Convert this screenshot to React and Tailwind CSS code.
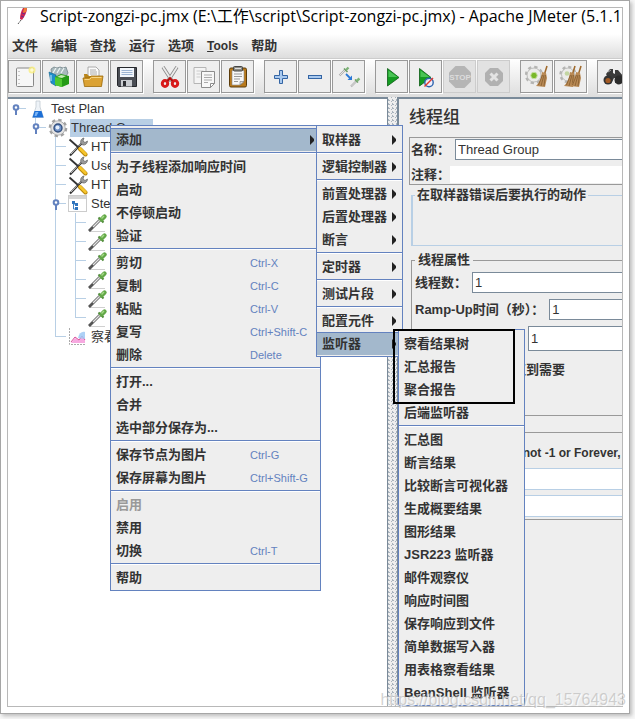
import { useState } from 'react';
import clsx from 'clsx';

const MENUS = ['文件', '编辑', '查找', '运行', '选项', 'Tools', '帮助'];

const CONTEXT_MENU = [
  [{ label: '添加', arrow: true, active: true }],
  [{ label: '为子线程添加响应时间' }, { label: '启动' }, { label: '不停顿启动' }, { label: '验证' }],
  [
    { label: '剪切', keys: 'Ctrl-X' },
    { label: '复制', keys: 'Ctrl-C' },
    { label: '粘贴', keys: 'Ctrl-V' },
    { label: '复写', keys: 'Ctrl+Shift-C' },
    { label: '删除', keys: 'Delete' },
  ],
  [{ label: '打开...' }, { label: '合并' }, { label: '选中部分保存为...' }],
  [{ label: '保存节点为图片', keys: 'Ctrl-G' }, { label: '保存屏幕为图片', keys: 'Ctrl+Shift-G' }],
  [{ label: '启用', disabled: true }, { label: '禁用' }, { label: '切换', keys: 'Ctrl-T' }],
  [{ label: '帮助' }],
];

const ADD_MENU = [
  [{ label: '取样器', arrow: true }],
  [{ label: '逻辑控制器', arrow: true }],
  [{ label: '前置处理器', arrow: true }, { label: '后置处理器', arrow: true }, { label: '断言', arrow: true }],
  [{ label: '定时器', arrow: true }],
  [{ label: '测试片段', arrow: true }],
  [{ label: '配置元件', arrow: true }, { label: '监听器', arrow: true, active: true }],
];

const LISTENER_MENU = [
  [{ label: '察看结果树' }, { label: '汇总报告' }, { label: '聚合报告' }, { label: '后端监听器' }],
  [
    { label: '汇总图' },
    { label: '断言结果' },
    { label: '比较断言可视化器' },
    { label: '生成概要结果' },
    { label: '图形结果' },
    { label: 'JSR223 监听器' },
    { label: '邮件观察仪' },
    { label: '响应时间图' },
    { label: '保存响应到文件' },
    { label: '简单数据写入器' },
    { label: '用表格察看结果' },
    { label: 'BeanShell 监听器' },
  ],
];

/* Toolbar icons, all on a 24px grid */

const NewIcon = () => (
  <svg viewBox="0 0 24 24" className="size-6">
    <rect x="3.5" y="3" width="17" height="18.500" rx="1" fill="#f7f7f7" stroke="#888" />
    <path d="M6 6v13" stroke="#999" strokeDasharray="1 3" />
    <circle cx="19" cy="5" r="3.500" fill="#f9ee7a" opacity=".8" />
    <circle cx="19" cy="5" r="1.800" fill="#fffbd0" />
  </svg>
);

const TemplatesIcon = () => (
  <svg viewBox="0 0 24 24" className="size-6">
    <path d="M4 4l3-2 3 1 3-1 3 1 3-1 2 6-3 5H5z" fill="#a9b9bd" stroke="#73858a" strokeWidth=".8" />
    <path d="M6 8l3-5M10 8l3-5M14 8l3-5" stroke="#eef6f6" strokeWidth="1.200" />
    <path d="M2 7l7 3v11l-5-3z" fill="#1f8fc9" stroke="#12648f" strokeWidth=".6" />
    <path d="M4 10v6" stroke="#aee0f8" strokeWidth="1.200" />
    <path d="M8 12l6-3 8 2v8l-7 3-7-2z" fill="#249a16" />
    <path d="M8 12l7 2v8l-7-2z" fill="#4fc92f" />
    <path d="M10 12l4-2 5 1-4 2z" fill="#c4ecb2" />
  </svg>
);

const OpenIcon = () => (
  <svg viewBox="0 0 24 24" className="size-6">
    <path d="M7 2h8l3 3v10H7z" fill="#fbfbfb" stroke="#999" strokeWidth=".8" />
    <path d="M9 5h6M9 7h7M9 9h7" stroke="#999" strokeWidth=".8" />
    <path d="M3 9h3l2 2h13v9H4z" fill="#b9851b" />
    <path d="M2 13h6l2-2h12l-1.500 10.500H3.500z" fill="#dba233" stroke="#9c6b0b" strokeWidth=".8" />
    <path d="M3.500 14.500h5l2-2h10" stroke="#f7d583" fill="none" />
  </svg>
);

const SaveIcon = () => (
  <svg viewBox="0 0 24 24" className="size-6">
    <path d="M2.500 2.500h19v19h-18l-1-1z" fill="#4b4e55" stroke="#26282c" />
    <rect x="5" y="3" width="14" height="9" fill="#f2f6fb" />
    <path d="M6.500 5.500h11M6.500 7.500h11M6.500 9.500h11" stroke="#9db4d2" />
    <rect x="6" y="15" width="11" height="6.500" fill="#c9ccd0" />
    <rect x="8" y="16" width="3" height="5" fill="#2b2d31" />
  </svg>
);

const CutIcon = () => (
  <svg viewBox="0 0 24 24" className="size-6">
    <path d="M5 2l9 14M19 2l-9 14" stroke="#8a8a8a" strokeWidth="3.400" />
    <path d="M5 2l9 14M19 2l-9 14" stroke="#ececec" strokeWidth="1.800" />
    <ellipse cx="7" cy="18.500" rx="2.700" ry="3" fill="none" stroke="#d81b1b" strokeWidth="3" />
    <ellipse cx="17" cy="18.500" rx="2.700" ry="3" fill="none" stroke="#d81b1b" strokeWidth="3" />
    <path d="M9.500 16l2.500-3 2.500 3" stroke="#b00f0f" strokeWidth="2" fill="none" />
  </svg>
);

const CopyIcon = () => (
  <svg viewBox="0 0 24 24" className="size-6">
    <path d="M2 2.500h12v16H2z" fill="#f4f4f4" stroke="#b5b5b5" />
    <path d="M4.500 6h7M4.500 9h4M4.500 12h4" stroke="#ccc" />
    <path d="M9.500 6.500h13v12l-4 4h-9z" fill="#f8f8f8" stroke="#8d8d8d" />
    <path d="M12 10h8M12 12.500h8M12 15h8M12 17.500h4" stroke="#aaa" />
    <path d="M18.500 22.500v-4h4z" fill="#fff" stroke="#8d8d8d" />
  </svg>
);

const PasteIcon = () => (
  <svg viewBox="0 0 24 24" className="size-6">
    <rect x="3.500" y="3" width="17" height="19" rx="1.500" fill="#b97a1c" stroke="#5c3c0a" />
    <path d="M6 5.500h12v11l-4 3.500H6z" fill="#f8f8f8" stroke="#888" strokeWidth=".6" />
    <path d="M8 9h8M8 11.500h8M8 14h6M8 16.500h4" stroke="#999" />
    <path d="M14 20v-3.500h4z" fill="#ddd" stroke="#777" strokeWidth=".6" />
    <rect x="7.500" y="1.500" width="9" height="4.500" rx="1" fill="#8d8d86" stroke="#444" />
    <path d="M9 3.500h6" stroke="#ddd" />
  </svg>
);

const PlusIcon = () => (
  <svg viewBox="0 0 24 24" className="size-6">
    <path d="M10.500 5.500h3v5h5v3h-5v5h-3v-5h-5v-3h5z" fill="#a9c9ee" stroke="#3465a4" />
  </svg>
);

const MinusIcon = () => (
  <svg viewBox="0 0 24 24" className="size-6">
    <rect x="5.500" y="10.500" width="13" height="3" fill="#a9c9ee" stroke="#3465a4" />
  </svg>
);

const ToggleIcon = () => (
  <svg viewBox="0 0 24 24" className="size-6">
    <path d="M2.500 10.500l6-6M14 21.500l5-5" stroke="#aaa" strokeWidth="2" />
    <path d="M2.500 10.500l6-6M14 21.500l5-5" stroke="#f4f4f4" strokeWidth=".8" />
    <path d="M7 3.500l3.500 3.500M18 14.500l3 3" stroke="#6b9a66" strokeWidth="1.600" />
    <path d="M9 5l2.500-2.500M19.500 16l3-2.500" stroke="#7db377" strokeWidth="2.400" />
    <path d="M9 9l4 4" stroke="#2a78d6" strokeWidth="1.800" />
    <path d="M15 10.500v4.500h-4.500z" fill="#2a78d6" />
  </svg>
);

const StartIcon = () => (
  <svg viewBox="0 0 24 24" className="size-6">
    <path d="M7.500 3.500v17.500L19 12.500z" fill="#149c22" stroke="#0b5d14" strokeWidth=".8" />
    <path d="M8.500 5.500v6.500h9z" fill="#49c455" />
  </svg>
);

const StartNoPauseIcon = () => (
  <svg viewBox="0 0 24 24" className="size-6">
    <path d="M5.500 3.500v17.500L17 12.500z" fill="#149c22" stroke="#0b5d14" strokeWidth=".8" />
    <path d="M6.500 5.500v6.500h9z" fill="#49c455" />
    <circle cx="15" cy="17.500" r="4.200" fill="#eef" fillOpacity=".85" stroke="#2f64ad" strokeWidth="1.400" />
    <path d="M10.500 21.500L19 13" stroke="#e23b2e" strokeWidth="1.400" />
  </svg>
);

const StopIcon = () => (
  <svg viewBox="0 0 24 24" className="size-6">
    <path d="M7.500 1h9L23 7.500v9L16.500 23h-9L1 16.500v-9z" fill="#b5b5b5" />
    <text x="12" y="15" textAnchor="middle" fontSize="8" fontWeight="700" fontFamily="Liberation Sans, sans-serif" fill="#dcdcdc">STOP</text>
  </svg>
);

const ShutdownIcon = () => (
  <svg viewBox="0 0 24 24" className="size-6">
    <path d="M8 3h8l5 5v8l-5 5H8l-5-5V8z" fill="#b1b1b1" />
    <path d="M8.500 8.500l7 7M15.500 8.500l-7 7" stroke="#e4e4e4" strokeWidth="3" />
  </svg>
);

const Broom = () => (
  <>
    <path d="M22 1l-2.500 8" stroke="#a06a2c" strokeWidth="1.600" />
    <path d="M17 7l4 1 1 5-2 9-9-1c3-3 5-7 6-14z" fill="#b98a55" />
    <path d="M17.500 10l-4 10M19 10l-3 11M20.500 10l-1.500 11" stroke="#7d5629" strokeWidth=".7" />
  </>
);

const ClearIcon = () => (
  <svg viewBox="0 0 24 24" className="size-6">
    <circle cx="9" cy="10" r="8" fill="none" stroke="#b5b5b3" strokeWidth="2.400" strokeDasharray="3.300 2.980" />
    <circle cx="9" cy="10" r="7" fill="#ececea" stroke="#b0b0ae" strokeWidth=".8" />
    <Broom />
    <circle cx="9" cy="10.500" r="3.200" fill="#79b828" stroke="#c4dfa0" />
  </svg>
);

const ClearAllIcon = () => (
  <svg viewBox="0 0 24 24" className="size-6">
    <circle cx="9" cy="9.500" r="7.500" fill="none" stroke="#b5b5b3" strokeWidth="2.400" strokeDasharray="3.100 2.790" />
    <circle cx="9" cy="9.500" r="6.500" fill="#ececea" stroke="#b0b0ae" strokeWidth=".8" />
    <circle cx="8" cy="8.500" r="2.300" fill="#c3d6a2" />
    <g transform="translate(-6 0)"><Broom /></g>
    <Broom />
  </svg>
);

const SearchIcon = () => (
  <svg viewBox="0 0 24 24" className="size-6">
    <path d="M4 9l4-5h3v4l2 1V5h3l5 6v7h-8v-5h-1l-3 6z" fill="#3a3a3a" />
    <circle cx="6" cy="15" r="4.500" fill="#333" />
    <circle cx="6" cy="15.500" r="2.600" fill="#a45a24" />
    <path d="M6 7l3-2" stroke="#aaa" />
    <circle cx="17" cy="15" r="4.500" fill="#2b2b2b" />
  </svg>
);

const TOOLBAR = [
  [
    { name: '新建', Icon: NewIcon },
    { name: '模板', Icon: TemplatesIcon },
    { name: '打开', Icon: OpenIcon },
    { name: '保存', Icon: SaveIcon },
  ],
  [
    { name: '剪切', Icon: CutIcon },
    { name: '复制', Icon: CopyIcon },
    { name: '粘贴', Icon: PasteIcon },
  ],
  [
    { name: '展开', Icon: PlusIcon },
    { name: '折叠', Icon: MinusIcon },
    { name: '切换', Icon: ToggleIcon },
  ],
  [
    { name: '启动', Icon: StartIcon },
    { name: '不停顿启动', Icon: StartNoPauseIcon },
    { name: '停止', Icon: StopIcon, disabled: true },
    { name: '关闭', Icon: ShutdownIcon, disabled: true },
  ],
  [
    { name: '清除', Icon: ClearIcon },
    { name: '清除全部', Icon: ClearAllIcon },
  ],
  [{ name: '查找', Icon: SearchIcon }],
];

/* Tree icons, 20px grid */

const FlaskIcon = () => (
  <svg viewBox="0 0 20 20" className="size-5 shrink-0">
    <path d="M8 2h4v6l3.500 10.500h-11L8 8z" fill="#eef3f8" stroke="#c2cad2" strokeWidth=".8" />
    <path d="M6.500 12h7l2 6.500h-11z" fill="#1c6fd6" />
    <path d="M7.500 13h3l-2 4h-2z" fill="#7ab4f5" />
  </svg>
);

const GearIcon = () => (
  <svg viewBox="0 0 20 20" className="size-5 shrink-0">
    <circle cx="10" cy="10" r="8" fill="none" stroke="#a2a2a2" strokeWidth="2.600" strokeDasharray="3.300 2.983" />
    <circle cx="10" cy="10" r="7.200" fill="#e4e4e4" stroke="#9a9a9a" strokeWidth=".7" />
    <circle cx="10" cy="10" r="4" fill="#6f92c8" stroke="#34507e" strokeWidth="1.400" />
    <circle cx="9.500" cy="9.500" r="2" fill="#e6eefb" />
  </svg>
);

const ToolsIcon = () => (
  <svg viewBox="0 0 20 20" className="size-5 shrink-0">
    <path d="M2 18.500L15 5" stroke="#333" strokeWidth="2" />
    <path d="M3 17L15 4.500" stroke="#bbb" strokeWidth="1" />
    <path d="M13 6.500c-1-2 0-5 3-5.500l-1 3 2 1.500 2.500-1.500c0 3-2.500 4.500-5 4z" fill="#999" stroke="#555" strokeWidth=".6" />
    <path d="M1.500 2.500l9 8" stroke="#333" strokeWidth="1.800" />
    <path d="M12 12l5.500 5.500" stroke="#b8860b" strokeWidth="4" strokeLinecap="round" />
    <path d="M12 11.500l5.500 5.500" stroke="#f6c52b" strokeWidth="2.600" strokeLinecap="round" />
  </svg>
);

const ControllerIcon = () => (
  <svg viewBox="0 0 20 20" className="size-5 shrink-0">
    <rect x=".5" y="1.500" width="18" height="16" fill="#fff" stroke="#ccc" />
    <path d="M1 2h17v3H1z" fill="#d5d5d5" />
    <path d="M5.500 8v7M5.500 10h3M5.500 15h3" stroke="#3c7fc4" />
    <path d="M4 7h3v3H4zM7 9h3v3H7zM7 13h3v3H7z" fill="#2f74bd" />
  </svg>
);

const DropperIcon = () => (
  <svg viewBox="0 0 20 20" className="size-5 shrink-0">
    <path d="M1 18.500h16" stroke="#c4c4c4" strokeWidth=".8" />
    <path d="M1 18L12 7" stroke="#555" strokeWidth="2.800" />
    <path d="M5 14L12.500 6.500" stroke="#e4e4e4" strokeWidth="1.400" />
    <path d="M10.500 4.500l5 5" stroke="#4f8a38" strokeWidth="2" />
    <path d="M13.500 6.500l3-3" stroke="#63a848" strokeWidth="4.400" strokeLinecap="round" />
    <path d="M13.500 5.500l2.500-2.500" stroke="#a5da87" strokeWidth="1.400" />
  </svg>
);

const ChartIcon = () => (
  <svg viewBox="0 0 20 20" className="size-5 shrink-0">
    <path d="M1.500 1v16.500H18" stroke="#aaa" strokeDasharray="2 1" fill="none" />
    <path d="M3 16l4-5 4 2 3-3 3 3v3z" fill="#f7a9e0" />
    <path d="M3 15l4-5 4 3 3-4 3 4" stroke="#d94f9a" fill="none" />
    <path d="M10 11c1-5 4-7 7-6v7z" fill="#9fc9f5" opacity=".85" />
  </svg>
);

const TREE = [
  { level: 0, label: 'Test Plan', Icon: FlaskIcon, handle: true },
  { level: 1, label: 'Thread Group', Icon: GearIcon, handle: true, selected: true },
  { level: 2, label: 'HTTP', Icon: ToolsIcon },
  { level: 2, label: 'User', Icon: ToolsIcon },
  { level: 2, label: 'HTTP', Icon: ToolsIcon },
  { level: 2, label: 'Step', Icon: ControllerIcon, handle: true },
  { level: 3, Icon: DropperIcon },
  { level: 3, Icon: DropperIcon },
  { level: 3, Icon: DropperIcon },
  { level: 3, Icon: DropperIcon },
  { level: 3, Icon: DropperIcon },
  { level: 3, Icon: DropperIcon, last: true },
  { level: 2, label: '察看', Icon: ChartIcon, last: true },
];

// connector lines and the expand handle in front of a tree node
function TreeGuides({ level, handle, last }) {
  const x = level * 20 + 8;
  return (
    <svg width={(level + 1) * 20} height="19" className="shrink-0" stroke="#b8cfe5">
      {level === 3 && <path d={`M${x - 20.5} 0v19`} />}
      {level >= 2 && <path d={`M${x - 0.5} 0v${last ? 10 : 19}`} />}
      {level === 1 && <path d={`M${x - 0.5} 0v6`} />}
      <path d={`M${x} 9.500h10`} />
      {handle && (
        <g stroke="#6382bf" strokeWidth="2">
          <circle cx={x} cy="8.500" r="2.300" fill="#fff" />
          <path d={`M${x} 11v5`} />
        </g>
      )}
    </svg>
  );
}

function TreeNode({ level, label, Icon, handle, last, selected }) {
  return (
    <li className="flex h-[19px] items-center">
      <TreeGuides level={level} handle={handle} last={last} />
      <Icon />
      {label && (
        <span className={clsx('ml-0.5 px-px leading-[18px]', selected && 'bg-[#b8cfe5]')}>{label}</span>
      )}
    </li>
  );
}

function Menu({ groups, className }) {
  return (
    <div role="menu" className={clsx('absolute border border-[#6382bf] bg-[#eeeeee] pt-0.5 pb-px font-bold', className)}>
      {groups.map((items, g) => (
        <div key={g} role="group">
          {g > 0 && <div role="separator" className="my-px h-0.5 border-t border-[#6382bf] bg-white" />}
          {items.map(item => (
            <button
              key={item.label}
              role="menuitem"
              disabled={item.disabled}
              className={clsx(
                'flex h-[23px] w-full items-center border-t pr-1.5 pl-[5px] text-left leading-5 whitespace-nowrap',
                item.active ? 'border-[#6382bf] bg-[#a3b8cc]' : 'border-transparent',
                item.disabled && 'text-[#999999]'
              )}
            >
              <span className="flex-1">{item.label}</span>
              {item.keys && <kbd className="w-16 font-[Liberation_Sans,sans-serif] text-[11px] font-normal text-[#6382bf]">{item.keys}</kbd>}
              {item.arrow && (
                <svg viewBox="0 0 4 10" className="h-2.5 w-1" fill="#222">
                  <path d="M0 0l4 4v2L0 10z" />
                </svg>
              )}
            </button>
          ))}
        </div>
      ))}
    </div>
  );
}

function Field({ id, label, value, onChange, className }) {
  return (
    <div className="flex items-center gap-[5px]">
      <label htmlFor={id} className="shrink-0 whitespace-nowrap">{label}</label>
      <input
        id={id}
        value={value}
        onChange={onChange}
        className={clsx('min-w-0 flex-1 border border-r-0 border-[#7a8a99] bg-white px-0.5 font-normal outline-none', className)}
      />
    </div>
  );
}

export default function App() {
  const [form, setForm] = useState({ name: 'Thread Group', comment: '', threads: '1', rampUp: '1', loops: '1', duration: '', delay: '' });
  const set = key => e => setForm({ ...form, [key]: e.target.value });

  return (
    <div className="relative h-screen overflow-hidden bg-[#f8f8f8] pr-[5px] pb-[5px] font-[Liberation_Sans,Noto_Sans_CJK_SC,sans-serif] text-[13px] text-[#333333]">
      <div className="h-full border border-[#a6a6a6] bg-white p-1.5 shadow-[2px_2px_4px_#bbbbbb]">
        <div className="flex h-full flex-col overflow-hidden border border-[#b8b8b8] bg-white">
          {/* Title bar */}
          <header className="flex h-[26px] shrink-0 items-start gap-1 pl-2">
            <svg viewBox="0 0 20 18" className="h-[18px] w-5 shrink-0">
              <path d="M7 0h4c0 4-2 8-5 12l-2-1c0-4 1-8 3-11z" fill="#cc2455" />
              <path d="M8 0h3l-1 4-3 1z" fill="#ef7d32" />
              <path d="M6 5l3 1M5 8l3 1" stroke="#6b2b8c" />
              <path d="M5 12l-3 4" stroke="#555" strokeDasharray="2 1" />
            </svg>
            <h1 className="font-[Open_Sans,Noto_Sans_CJK_SC,sans-serif] text-base leading-[17px] whitespace-nowrap text-black">
              Script-zongzi-pc.jmx (E:\工作\script\Script-zongzi-pc.jmx) - Apache JMeter (5.1.1
            </h1>
          </header>

          {/* Menu bar */}
          <nav className="flex h-6 shrink-0 items-center gap-[13px] bg-linear-to-b from-white to-[#dddddd] pl-1 font-bold">
            {MENUS.map(menu => (
              <button key={menu} className="leading-5">
                {menu === 'Tools' ? <span className="text-xs"><u>T</u>ools</span> : menu}
              </button>
            ))}
          </nav>

          {/* Toolbar */}
          <div role="toolbar" className="flex h-[39px] shrink-0 gap-2.5 border-t border-[#cccccc] bg-linear-to-b from-white to-[#dddddd] pt-px">
            {TOOLBAR.map((group, g) => (
              <div key={g} className="flex shrink-0 gap-px">
                {group.map(({ name, Icon, disabled }) => (
                  <button
                    key={name}
                    aria-label={name}
                    disabled={disabled}
                    className={clsx(
                      'flex size-[33px] items-center justify-center border',
                      disabled ? 'border-[#cccccc] bg-[#e2e2e2]' : 'border-[#999999] bg-[#eeeeee] shadow-[1px_1px_0_#ffffff]'
                    )}
                  >
                    <Icon />
                  </button>
                ))}
              </div>
            ))}
          </div>

          <main className="flex min-h-0 flex-1">
            <ul className="w-[380px] shrink-0 border-t-2 border-r border-[#7a8a99] bg-white">
              {TREE.map((node, i) => <TreeNode key={i} {...node} />)}
            </ul>

            {/* Split pane divider */}
            <div className="w-[9px] shrink-0 bg-[#eeeeee] [background-image:linear-gradient(45deg,#a9b3bd_25%,transparent_25%,transparent_75%,#a9b3bd_75%)] bg-[size:4px_4px]" />

            <section className="min-w-0 flex-1 border-t-2 border-l-2 border-[#7a8a99] bg-[#eeeeee] pl-2.5 font-bold">
              <h2 className="py-2 text-[17px] leading-[22px] font-medium">线程组</h2>

              <div className="flex flex-col gap-1.5 border border-r-0 border-[#999999] py-px pl-px">
                <Field id="name" label="名称：" value={form.name} onChange={set('name')} className="h-[21px]" />
                <div className="flex items-center">
                  <label htmlFor="comment" className="shrink-0 leading-[17px]">注释：</label>
                  <input id="comment" value={form.comment} onChange={set('comment')} className="h-[17px] min-w-0 flex-1 bg-white outline-none" />
                </div>
              </div>

              <fieldset className="ml-0.5 border border-r-0 border-l-2 border-[#b8cfe5] pb-10">
                <legend className="ml-0.5 px-0.5 leading-5 whitespace-nowrap">在取样器错误后要执行的动作</legend>
              </fieldset>

              <fieldset className="mt-1 ml-0.5 border border-r-0 border-[#999999] pb-8 pl-[3px]">
                <legend className="px-[3px] leading-5">线程属性</legend>
                <div className="flex flex-col gap-1.5 pt-0.5">
                  <Field id="threads" label="线程数：" value={form.threads} onChange={set('threads')} className="h-[21px]" />
                  <Field id="ramp" label="Ramp-Up时间（秒）：" value={form.rampUp} onChange={set('rampUp')} className="h-[21px]" />
                  <div className="flex pl-[113px]">
                    <input aria-label="循环次数" value={form.loops} onChange={set('loops')} className="h-[25px] min-w-0 flex-1 border border-r-0 border-[#7a8a99] bg-white px-0.5 font-normal outline-none" />
                  </div>
                  <label className="flex h-[26px] items-center gap-[7px] whitespace-nowrap">
                    <input type="checkbox" className="size-[13px]" />
                    延迟创建线程直到需要
                  </label>
                </div>
              </fieldset>

              <div className="mt-4 ml-0.5 flex flex-col gap-[5px] border border-r-0 border-[#999999] pb-0.5 pl-4">
                <p className="pt-2.5 text-xs leading-5 whitespace-nowrap">If Loop Count is not -1 or Forever,</p>
                <input aria-label="持续时间（秒）" value={form.duration} onChange={set('duration')} className="h-[22px] border border-r-0 border-[#b8cfe5] bg-white outline-none" />
                <input aria-label="启动延迟（秒）" value={form.delay} onChange={set('delay')} className="h-[22px] border border-r-0 border-[#b8cfe5] bg-white outline-none" />
              </div>
            </section>
          </main>
        </div>
      </div>

      <Menu groups={CONTEXT_MENU} className="top-[125px] left-[110px] w-[211px]" />
      <Menu groups={ADD_MENU} className="top-[125px] left-[316px] w-[87px]" />
      <Menu groups={LISTENER_MENU} className="top-[329px] left-[398px] w-[127px]" />
      <div className="pointer-events-none absolute top-[329px] left-[393px] h-[75px] w-[122px] border-2 border-black" />

      <p className="pointer-events-none absolute right-[9px] bottom-[9px] text-base leading-5 text-[#b4b4b4]/60 [text-shadow:1px_1px_1px_#ffffff]">
        https://blog.csdn.net/qq_15764943
      </p>
    </div>
  );
}
